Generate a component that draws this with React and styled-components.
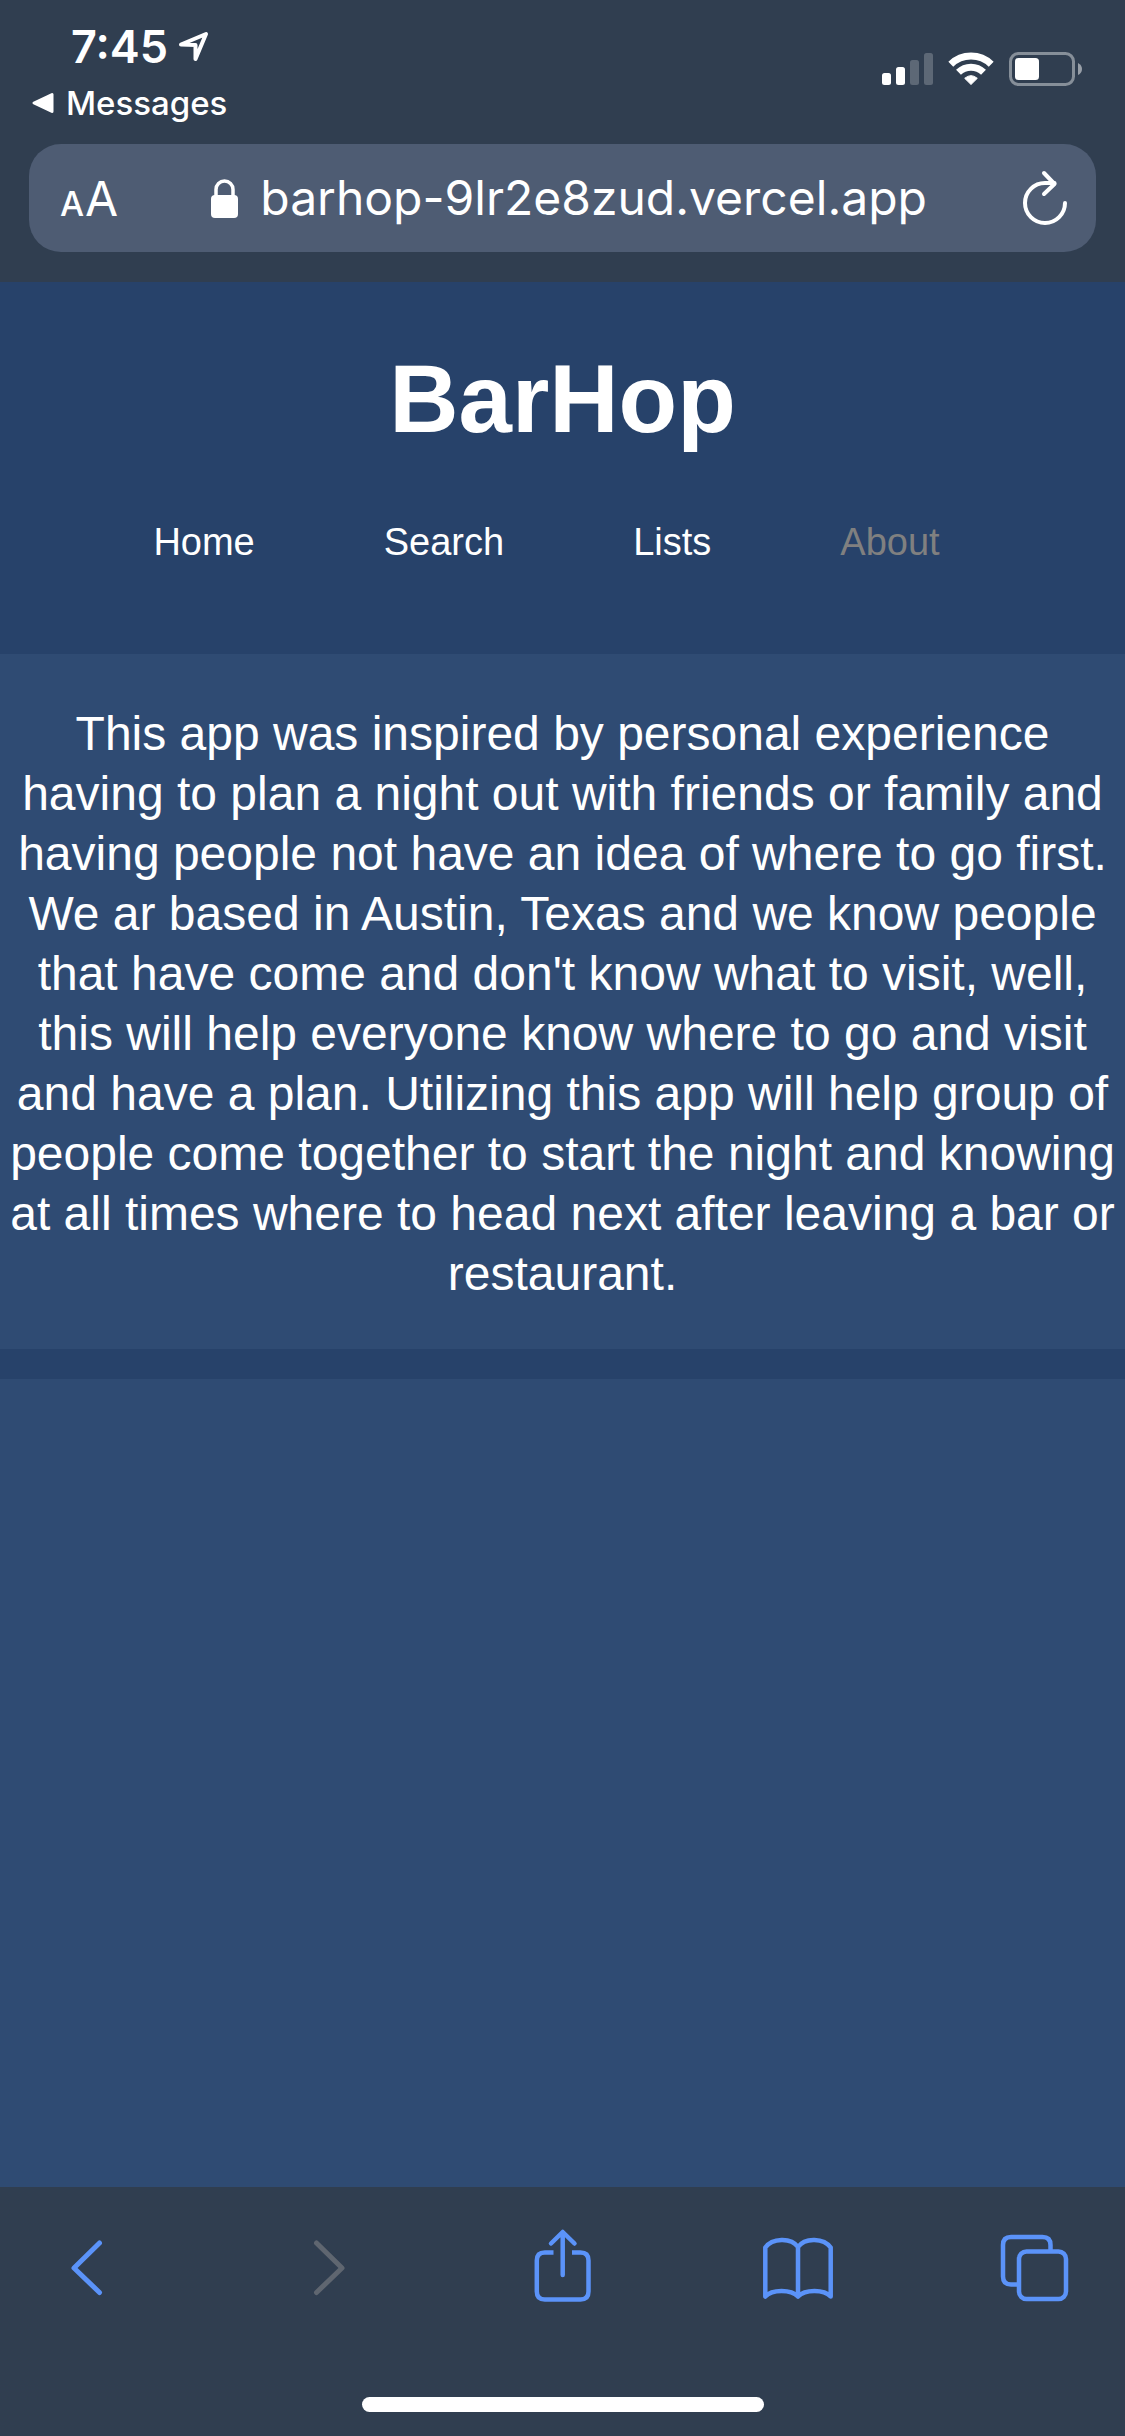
import React from "react";
import styled, { createGlobalStyle } from "styled-components";

const colors = {
  chrome: "#303e50",
  field: "#4e5c73",
  header: "#27426a",
  page: "#2f4b73",
  accent: "#5b93f9",
  disabled: "#5f6670",
};

const systemFont = `Inter, Roboto, "Liberation Sans", sans-serif`;
const siteFont = `"Liberation Sans", Arial, Helvetica, sans-serif`;

const GlobalStyle = createGlobalStyle`
  *, *::before, *::after { box-sizing: border-box; }
  body { margin: 0; background: ${colors.page}; }
  button { padding: 0; border: 0; background: none; color: inherit; font: inherit; cursor: pointer; }
  svg { display: block; overflow: visible; flex: none; }
`;

const Screen = styled.div`
  display: flex;
  flex-direction: column;
  min-height: 100vh;
  color: #fff;
`;

const BrowserTop = styled.div`
  background: ${colors.chrome};
  font-family: ${systemFont};
  padding-bottom: 30px;
`;

const StatusBar = styled.div`
  display: flex;
  justify-content: space-between;
  align-items: flex-start;
  height: 144px;
  padding: 19px 43px 0 32px;
`;

const StatusLeft = styled.div`
  display: flex;
  flex-direction: column;
  align-items: flex-start;
`;

const Clock = styled.div`
  display: flex;
  align-items: center;
  gap: 10px;
  padding-left: 39px;
  font-size: 45px;
  line-height: 56px;
  font-weight: 600;
`;

const BackToApp = styled.button`
  display: flex;
  align-items: center;
  gap: 12px;
  font-size: 33px;
  line-height: 56px;
  font-weight: 500;
`;

const StatusIcons = styled.div`
  display: flex;
  gap: 15px;
  padding-top: 33px;
`;

const AddressBar = styled.div`
  display: flex;
  align-items: center;
  height: 108px;
  margin: 0 29px;
  padding: 0 26px 0 31px;
  border-radius: 32px;
  background: ${colors.field};
`;

const TextSize = styled.button`
  display: flex;
  align-items: baseline;
  gap: 1px;
  padding-top: 6px;
  font-size: 48px;
  line-height: 60px;
`;

const SmallLetter = styled.span`
  font-size: 34px;
  font-weight: 500;
`;

const Address = styled.button`
  flex: 1;
  display: flex;
  justify-content: center;
  align-items: center;
  gap: 22px;
  font-size: 48px;
  line-height: 60px;
`;

const SiteHeader = styled.header`
  height: 372px;
  padding-top: 62px;
  background: ${colors.header};
  font-family: ${siteFont};
  text-align: center;
`;

const SiteTitle = styled.h1`
  margin: 0;
  font-size: 96px;
  line-height: 110px;
  font-weight: 700;
`;

const SiteNav = styled.nav`
  display: flex;
  justify-content: center;
  gap: 129px;
  padding: 66px 32px 0 0;
`;

const NavLink = styled.a`
  color: ${(p) => (p.$current ? "gray" : "#fff")};
  font-size: 38px;
  line-height: 44px;
  text-decoration: none;
`;

const Content = styled.main`
  flex: 1;
  background: ${colors.page};
  font-family: ${siteFont};
`;

const AboutText = styled.p`
  margin: 0;
  padding: 50px 8px 45px;
  font-size: 48px;
  line-height: 60px;
  text-align: center;
`;

const Divider = styled.div`
  height: 30px;
  background: ${colors.header};
`;

const BrowserBottom = styled.div`
  display: flex;
  flex-direction: column;
  align-items: center;
  padding: 43px 51px 24px;
  background: ${colors.chrome};
`;

const Toolbar = styled.div`
  display: flex;
  justify-content: space-between;
  width: 100%;
  margin-bottom: 95px;
`;

const ToolButton = styled.button`
  color: ${colors.accent};
  &:disabled { color: ${colors.disabled}; cursor: default; }
`;

const HomeIndicator = styled.div`
  width: 402px;
  height: 15px;
  border-radius: 8px;
  background: #fff;
`;

const ToolIcon = ({ children }) => (
  <svg width="72" height="72" viewBox="0 0 72 72" fill="none" stroke="currentColor"
    strokeWidth="4.5" strokeLinecap="round" strokeLinejoin="round" aria-hidden="true">
    {children}
  </svg>
);

const tools = [
  { name: "Back", icon: <path strokeWidth="5" d="M48.5 13 23 38l25.5 24.5" /> },
  { name: "Forward", disabled: true, icon: <path strokeWidth="5" d="M27.5 13 53 38 27.5 62.5" /> },
  {
    name: "Share",
    icon: (
      <>
        <path strokeLinecap="butt" d="M26.5 22.5h-8.700q-8 0-8 8v31q0 8 8 8h35.700q8 0 8-8v-31q0-8-8-8H45" />
        <path d="M35.700 3v42M24 13.500 35.700 2 47.500 13.500" />
      </>
    ),
  },
  {
    name: "Bookmarks",
    icon: <path d="M1.300 66.500V17.500C8 8 27 7 34 17C41 7 60 8 66.700 17.500V66.500C60 59 41 59 34 66.500C27 59 8 59 1.300 66.500ZM34 17V66.500" />,
  },
  {
    name: "Tabs",
    icon: (
      <>
        <path strokeLinecap="butt" d="M48.500 21V15q0-8-8-8h-31.500q-8 0-8 8v31.500q0 8 8 8h7" />
        <rect x="17" y="21.500" width="47" height="47.500" rx="7.500" />
      </>
    ),
  },
];

const LocationIcon = () => (
  <svg width="32" height="32" viewBox="0 0 32 32" fill="none" stroke="#fff" strokeWidth="4" strokeLinejoin="round" aria-hidden="true">
    <path d="M3 13.500 28 3 17.500 28V14Z" />
  </svg>
);

const BackTriangle = () => (
  <svg width="22" height="22" viewBox="0 0 22 22" fill="#fff" stroke="#fff" strokeWidth="3" strokeLinejoin="round" aria-hidden="true">
    <path d="M2 11 20 2.500v17Z" />
  </svg>
);

const SignalIcon = () => (
  <svg width="51" height="33" viewBox="0 0 51 33" fill="#fff" role="img" aria-label="Signal">
    <rect x="0" y="21" width="9" height="12" rx="2.500" />
    <rect x="14" y="15" width="9" height="18" rx="2.500" />
    <rect x="28" y="8" width="9" height="25" rx="2.500" opacity=".22" />
    <rect x="42" y="1" width="9" height="32" rx="2.500" opacity=".22" />
  </svg>
);

const WifiIcon = () => (
  <svg width="46" height="33" viewBox="0 0 46 33" role="img" aria-label="Wi-Fi">
    <g fill="none" stroke="#fff" strokeWidth="7">
      <path d="M2.800 12.200A29 29 0 0 1 43.200 12.200" />
      <path d="M10.500 20.300A18 18 0 0 1 35.500 20.300" />
    </g>
    <path fill="#fff" stroke="#fff" strokeWidth="1" strokeLinejoin="round" d="M16.700 26.300Q23 21 29.300 26.300L23 32.500Z" />
  </svg>
);

const BatteryIcon = () => (
  <svg width="73" height="34" viewBox="0 0 73 34" role="img" aria-label="Battery">
    <rect x="1.500" y="1.500" width="63" height="31" rx="8" fill="none" stroke="#fff" strokeOpacity=".42" strokeWidth="3" />
    <rect x="6" y="6" width="24" height="22" rx="3.500" fill="#fff" />
    <path d="M69 11q4 2 4 6t-4 6Z" fill="#fff" opacity=".5" />
  </svg>
);

const LockIcon = () => (
  <svg width="27" height="39" viewBox="0 0 27 39" aria-hidden="true">
    <rect y="16" width="27" height="23" rx="4" fill="#fff" />
    <path d="M5 18v-7.500a8.500 8.500 0 0 1 17 0V18" fill="none" stroke="#fff" strokeWidth="3.500" />
  </svg>
);

const ReloadIcon = () => (
  <svg width="50" height="54" viewBox="0 0 50 54" fill="none" stroke="#fff" strokeWidth="4" strokeLinecap="round" strokeLinejoin="round" aria-hidden="true">
    <path d="M45 32A20 20 0 1 1 25 12H34.500" />
    <path d="M24 2 34.500 13 24 23" />
  </svg>
);

export default function App() {
  return (
    <Screen>
      <GlobalStyle />
      <BrowserTop>
        <StatusBar>
          <StatusLeft>
            <Clock>7:45<LocationIcon /></Clock>
            <BackToApp type="button"><BackTriangle />Messages</BackToApp>
          </StatusLeft>
          <StatusIcons>
            <SignalIcon />
            <WifiIcon />
            <BatteryIcon />
          </StatusIcons>
        </StatusBar>
        <AddressBar>
          <TextSize type="button"><SmallLetter>A</SmallLetter>A</TextSize>
          <Address type="button"><LockIcon />barhop-9lr2e8zud.vercel.app</Address>
          <button type="button" aria-label="Reload"><ReloadIcon /></button>
        </AddressBar>
      </BrowserTop>
      <SiteHeader>
        <SiteTitle>BarHop</SiteTitle>
        <SiteNav>
          <NavLink href="#home">Home</NavLink>
          <NavLink href="#search">Search</NavLink>
          <NavLink href="#lists">Lists</NavLink>
          <NavLink href="#about" $current aria-current="page">About</NavLink>
        </SiteNav>
      </SiteHeader>
      <Content>
        <AboutText>
          This app was inspired by personal experience having to plan a night out with friends or
          family and having people not have an idea of where to go first. We ar based in Austin,
          Texas and we know people that have come and don't know what to visit, well, this will help
          everyone know where to go and visit and have a plan. Utilizing this app will help group of
          people come together to start the night and knowing at all times where to head next after
          leaving a bar or restaurant.
        </AboutText>
        <Divider />
      </Content>
      <BrowserBottom>
        <Toolbar>
          {tools.map((t) => (
            <ToolButton key={t.name} type="button" aria-label={t.name} disabled={t.disabled}>
              <ToolIcon>{t.icon}</ToolIcon>
            </ToolButton>
          ))}
        </Toolbar>
        <HomeIndicator />
      </BrowserBottom>
    </Screen>
  );
}
